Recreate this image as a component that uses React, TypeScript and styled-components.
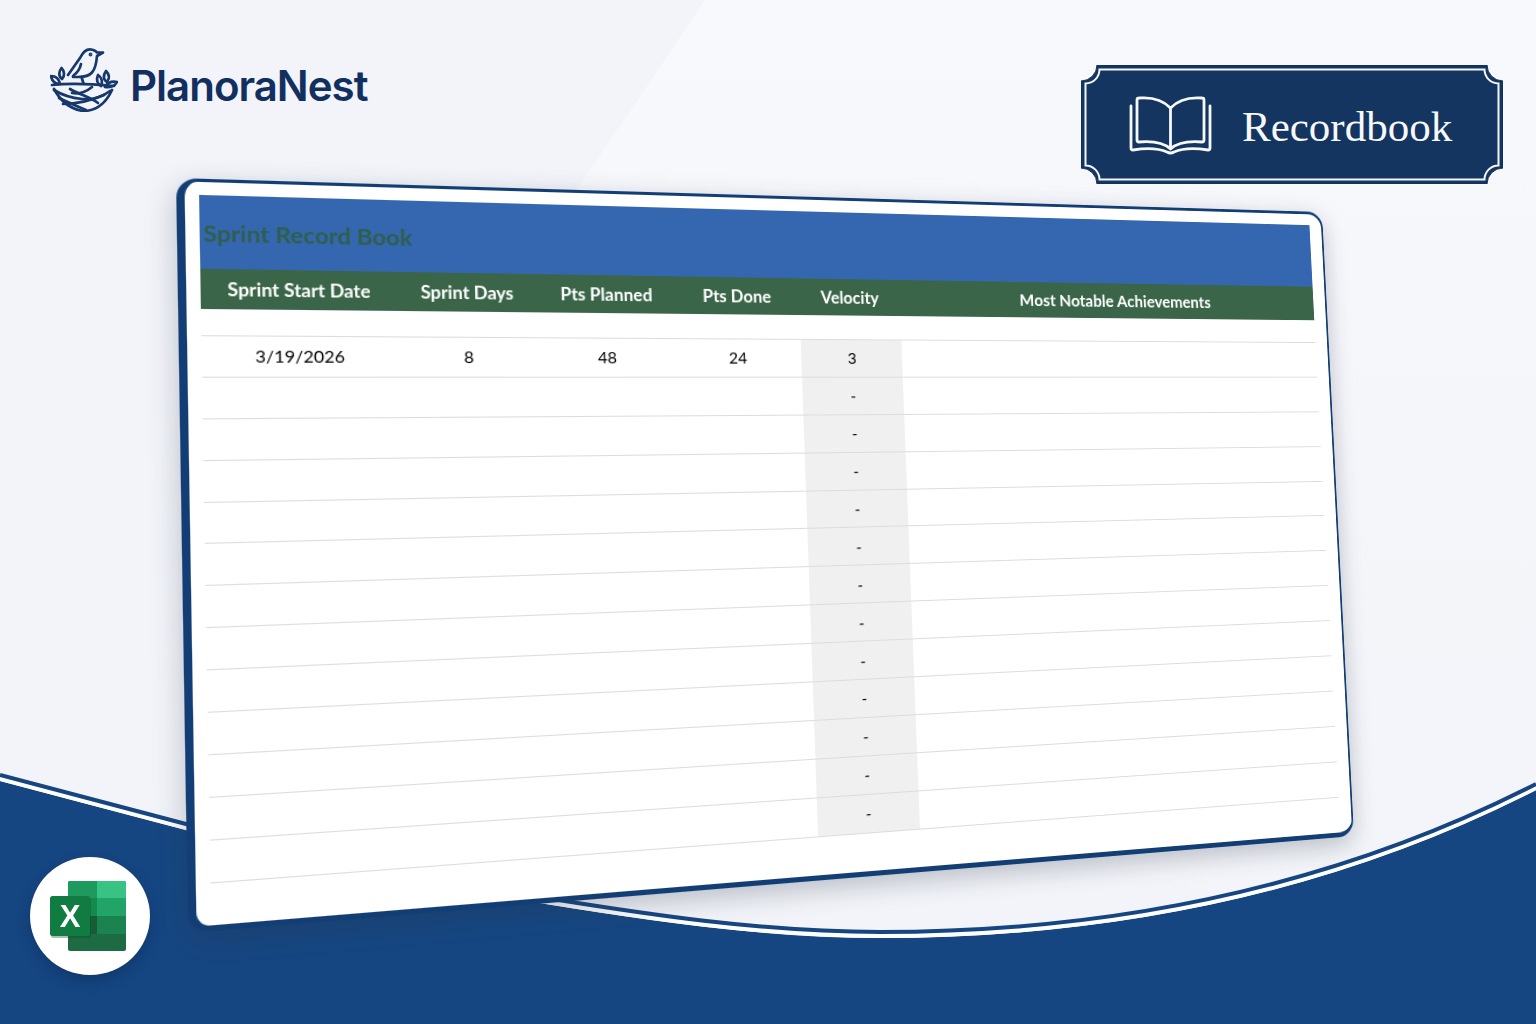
import React from 'react'
import styled, { createGlobalStyle } from 'styled-components'

const SHEET_W = 1150
const SHEET_H = 680

// maps the flat sheet onto its four corners in the picture
function quadMatrix() {
  const [x0, y0, x1, y1, x2, y2, x3, y3] = [176, 178, 1322, 212, 1354, 836, 188, 933]
  const dx1 = x1 - x2
  const dx2 = x3 - x2
  const sx = x0 - x1 + x2 - x3
  const dy1 = y1 - y2
  const dy2 = y3 - y2
  const sy = y0 - y1 + y2 - y3
  const den = dx1 * dy2 - dx2 * dy1
  const g = (sx * dy2 - dx2 * sy) / den
  const h = (dx1 * sy - sx * dy1) / den
  const a = x1 - x0 + g * x1
  const b = x3 - x0 + h * x3
  const d = y1 - y0 + g * y1
  const e = y3 - y0 + h * y3
  return [
    a / SHEET_W, d / SHEET_W, 0, g / SHEET_W,
    b / SHEET_H, e / SHEET_H, 0, h / SHEET_H,
    0, 0, 1, 0,
    x0, y0, 0, 1,
  ].join(',')
}

const GlobalStyle = createGlobalStyle`
  html, body {
    margin: 0;
    padding: 0;
    background: #f3f5fa;
  }
`

const Page = styled.div`
  position: relative;
  width: 1536px;
  height: 1024px;
  overflow: hidden;
  background: #f2f4f9;
  font-family: 'Lato', 'Liberation Sans', sans-serif;
`

const Backdrop = styled.svg`
  position: absolute;
  inset: 0;
`

const TopBar = styled.header`
  position: relative;
  display: flex;
  justify-content: space-between;
  align-items: flex-start;
  padding: 48px 33px 0 50px;
`

const Brand = styled.div`
  display: flex;
  align-items: center;
  gap: 12px;
  height: 64px;
`

const BrandName = styled.div`
  margin-top: 10px;
  font-family: 'Inter', 'Liberation Sans', sans-serif;
  font-size: 42px;
  font-weight: 600;
  letter-spacing: -1px;
  color: #12305f;
`

const Plaque = styled.div`
  position: relative;
  margin-top: 17px;
  width: 422px;
  height: 119px;
  display: flex;
  align-items: center;
  gap: 22px;
  padding-left: 39px;
  box-sizing: border-box;
`

const PlaqueFrame = styled.svg`
  position: absolute;
  inset: 0;
`

const PlaqueLabel = styled.div`
  position: relative;
  margin-top: 4px;
  font-family: 'Liberation Serif', serif;
  font-size: 43px;
  color: #f6f8fb;
`

const BookIcon = styled.svg`
  position: relative;
  flex: none;
  margin-top: 1px;
`

const Sheet = styled.section`
  position: absolute;
  left: 0;
  top: 0;
  width: ${SHEET_W}px;
  height: ${SHEET_H}px;
  box-sizing: border-box;
  padding: 12px 14px 0 12px;
  background: #ffffff;
  border-style: solid;
  border-color: #123e75;
  border-width: 3px 2px 5px 7px;
  border-radius: 18px;
  box-shadow: 0 8px 26px rgba(40, 50, 70, 0.28);
  transform-origin: 0 0;
  transform: matrix3d(${quadMatrix()});
`

const Banner = styled.div`
  height: 68px;
  display: flex;
  align-items: center;
  padding-left: 3px;
  background: #3567b0;
`

const Title = styled.h1`
  margin: 0;
  font-size: 21px;
  font-weight: 700;
  color: #2f5f4c;
`

const columns = '167px 130px 126px 126px 103px 1fr'

const HeaderRow = styled.div`
  display: grid;
  grid-template-columns: ${columns};
  height: 37px;
  align-items: center;
  background: #3a6548;
`

const HeaderCell = styled.div<{ $size: number; $shift?: number }>`
  text-align: center;
  font-size: ${(p) => p.$size}px;
  font-weight: 700;
  color: #ffffff;
  padding-left: ${(p) => p.$shift ?? 0}px;
`

const Rows = styled.div`
  margin-top: 24px;
  border-top: 1px solid #dcdcdc;
`

const Row = styled.div`
  display: grid;
  grid-template-columns: ${columns};
  height: 37.9px;
  box-sizing: border-box;
  border-bottom: 1px solid #dcdcdc;
`

const Cell = styled.div<{ $shaded?: boolean }>`
  display: flex;
  align-items: center;
  justify-content: center;
  font-size: 15.5px;
  color: #000000;
  background: ${(p) => (p.$shaded ? '#f0f0f0' : 'transparent')};
`

const ExcelBadge = styled.div`
  position: absolute;
  left: 30px;
  top: 857px;
  width: 120px;
  height: 118px;
  display: flex;
  align-items: center;
  justify-content: center;
  border-radius: 50%;
  background: #ffffff;
  box-shadow: 0 6px 14px rgba(5, 25, 60, 0.3);
`

const EDGE =
  'M0 781 C62 797 124 814 186 830 C310 862 430 885 552 905 C640 919 760 938 880 938 C1120 938 1340 890 1536 790'

function Background() {
  return (
    <Backdrop width="1536" height="1024" viewBox="0 0 1536 1024">
      <defs>
        <linearGradient id="pane" x1="0" y1="0" x2="0" y2="1">
          <stop offset="0" stopColor="#f8f9fc" stopOpacity="1" />
          <stop offset="0.6" stopColor="#f5f6fa" stopOpacity="0.6" />
          <stop offset="1" stopColor="#f5f6fa" stopOpacity="0.2" />
        </linearGradient>
      </defs>
      <polygon points="705,0 1536,0 1536,1000 300,600" fill="url(#pane)" />
      <path d={`${EDGE} V1024 H0 Z`} fill="#154682" />
      <path d={EDGE} transform="translate(0 -2)" fill="none" stroke="#ffffff" strokeWidth="4" />
      <path d={EDGE} transform="translate(0 -6)" fill="none" stroke="#154682" strokeWidth="4" />
    </Backdrop>
  )
}

function NestLogo() {
  return (
    <svg width="68" height="64" viewBox="10 8 68 64" fill="none" stroke="#17386c" strokeWidth="2.7" strokeLinecap="round" strokeLinejoin="round">
      {/* bird */}
      <path d="M28 35 L40 18 C43 12 47 9 51 9.5 C54 10 56 11 57 12.5 L63 12.5 L57 16 C56.5 22 56 28 52 32.5 C49 36 44 37 38 37 L33 37" />
      <path d="M41 24 C40 29 37 33 33 36" />
      <circle cx="50.5" cy="14.5" r="0.6" fill="#17386c" />
      <path d="M41.5 37 L43.5 43.5" />
      {/* leaves */}
      <path d="M22 39 C18 36 19 31 21.5 28 C24.5 31 25 36 22 39 Z" />
      <path d="M20 44 C15 44 12 41 11 36 C16 36 19 39 20 44 Z" />
      <path d="M61 46 C57 44 56 39 58 35 C61 37 63 41 61 46 Z" />
      <path d="M67 42 C63 40 63 35 66 31 C69 34 70 38 67 42 Z" />
      <path d="M65 47 C68 42 72 41 77 42 C75 46 70 48 65 47 Z" />
      {/* nest */}
      <path d="M12 45 C30 43 52 44 74 46" />
      <path d="M14 49 C20 60 30 69 43 71 C56 71 66 63 72 50" />
      <path d="M14 50 C22 55 32 58 42 59 C52 60 62 57 70 51" />
      <path d="M19 58 C28 62 36 66 46 70" />
      <path d="M23 64 C34 64 48 62 64 55" />
      <path d="M30 49 C38 54 50 57 58 63" />
      <path d="M52 47 C46 52 38 54 32 53" />
    </svg>
  )
}

function Book() {
  return (
    <BookIcon width="100" height="80" viewBox="0 0 100 80" fill="none" stroke="#f6f8fb" strokeWidth="2.8" strokeLinecap="round" strokeLinejoin="round">
      <path d="M50.5 23 C43 15 31 12 19 13 Q17 13 17 15 V55 Q17 57 19 57 C31 56 43 57 50.5 64 C58 57 70 56 82 57 Q84 57 84 55 V15 Q84 13 82 13 C70 12 58 15 50.5 23 V64" />
      <path d="M11 21 V63 Q11 65 13 65 C25 63 38 63 47 67 Q50.5 69 54 67 C63 63 76 63 88 65 Q90 65 90 63 V21" />
    </BookIcon>
  )
}

function notched(x: number, y: number, w: number, h: number, r: number) {
  const R = x + w
  const B = y + h
  return `M${x + r} ${y} H${R - r} A${r} ${r} 0 0 0 ${R} ${y + r} V${B - r} A${r} ${r} 0 0 0 ${R - r} ${B} H${x + r} A${r} ${r} 0 0 0 ${x} ${B - r} V${y + r} A${r} ${r} 0 0 0 ${x + r} ${y} Z`
}

function ExcelIcon() {
  return (
    <svg width="80" height="72" viewBox="0 0 80 72">
      <rect x="18" y="1" width="58" height="70" rx="2" fill="#1d6b42" />
      <path d="M20 1 H47 V18 H18 V3 Q18 1 20 1 Z" fill="#1f9a5e" />
      <path d="M47 1 H74 Q76 1 76 3 V18 H47 Z" fill="#38c385" />
      <rect x="18" y="18" width="29" height="18" fill="#148a4d" />
      <rect x="47" y="18" width="29" height="18" fill="#22a468" />
      <rect x="18" y="36" width="29" height="18" fill="#185c37" />
      <rect x="47" y="36" width="29" height="18" fill="#1a8350" />
      <rect x="1" y="18" width="40" height="40" rx="2.5" fill="#0b4a28" opacity="0.35" />
      <rect x="0" y="16" width="40" height="40" rx="2.5" fill="#107c41" />
      <text x="20" y="47" textAnchor="middle" fontFamily="Liberation Sans, sans-serif" fontWeight="700" fontSize="31" fill="#ffffff">X</text>
    </svg>
  )
}

const headers = [
  { label: 'Sprint Start Date', size: 16.5, shift: 1 },
  { label: 'Sprint Days', size: 16.5 },
  { label: 'Pts Planned', size: 16.5, shift: 2 },
  { label: 'Pts Done', size: 16.5, shift: 2 },
  { label: 'Velocity', size: 16.5 },
  { label: 'Most Notable Achievements', size: 17, shift: 6 },
]

const rows = [
  ['3/19/2026', '8', '48', '24', '3', ''],
  ...Array.from({ length: 12 }, () => ['', '', '', '', '-', '']),
]

export default function App() {
  return (
    <Page>
      <GlobalStyle />
      <Background />
      <TopBar>
        <Brand>
          <NestLogo />
          <BrandName>PlanoraNest</BrandName>
        </Brand>
        <Plaque>
          <PlaqueFrame width="422" height="119" viewBox="0 0 422 119" fill="none">
            <path d={notched(0, 0, 422, 119, 16)} fill="#14355f" stroke="#0f2f5c" strokeWidth="1" />
            <path d={notched(4.5, 4.5, 413, 110, 14)} stroke="#f3f5f9" strokeWidth="2" />
          </PlaqueFrame>
          <Book />
          <PlaqueLabel>Recordbook</PlaqueLabel>
        </Plaque>
      </TopBar>
      <Sheet>
        <Banner>
          <Title>Sprint Record Book</Title>
        </Banner>
        <HeaderRow>
          {headers.map((h) => (
            <HeaderCell key={h.label} $size={h.size} $shift={h.shift}>
              {h.label}
            </HeaderCell>
          ))}
        </HeaderRow>
        <Rows>
          {rows.map((row, i) => (
            <Row key={i}>
              {row.map((value, j) => (
                <Cell key={j} $shaded={j === 4}>
                  {value}
                </Cell>
              ))}
            </Row>
          ))}
        </Rows>
      </Sheet>
      <ExcelBadge>
        <ExcelIcon />
      </ExcelBadge>
    </Page>
  )
}
